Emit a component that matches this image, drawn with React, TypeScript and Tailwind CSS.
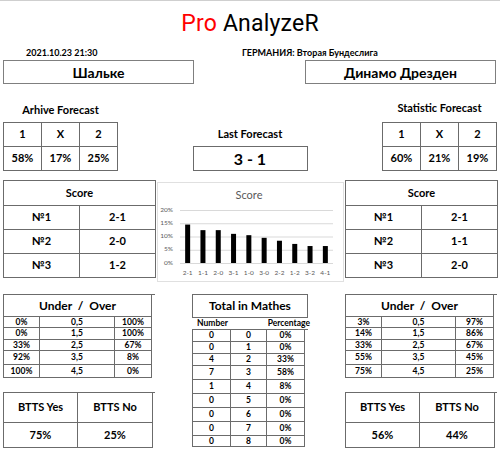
import React from "react";

const B = "border-[#6b6b6b]";

function Cell({ children, className = "" }: { children?: React.ReactNode; className?: string }) {
  return (
    <div className={`border-r border-b ${B} flex items-center justify-center ${className}`}>{children}</div>
  );
}

function OneXTwo({ vals }: { vals: string[] }) {
  return (
    <div className={`grid grid-cols-[38px_38px_38px] border-l border-t ${B} w-[115px] text-[11px] font-bold`}>
      {["1", "X", "2"].map((h) => (
        <Cell key={h} className="h-[24px]">{h}</Cell>
      ))}
      {vals.map((v, i) => (
        <Cell key={i} className="h-[24px]">{v}</Cell>
      ))}
    </div>
  );
}

function ScoreTable({ rows }: { rows: string[] }) {
  return (
    <div className={`w-[153px] border-l border-t ${B} text-[11px] font-bold grid grid-cols-[76px_76px]`}>
      <Cell className="col-span-2 h-[25px]">Score</Cell>
      {rows.map((r, i) => (
        <React.Fragment key={i}>
          <Cell className="h-[24px]">№{i + 1}</Cell>
          <Cell className="h-[24px]">{r}</Cell>
        </React.Fragment>
      ))}
    </div>
  );
}

const uoHeights = ["h-[11px]", "h-[12px]", "h-[11px]", "h-[14px]", "h-[13px]"];

function UnderOver({ rows, cols }: { rows: string[][]; cols: string }) {
  return (
    <div className={`w-[152px] border-l border-t ${B} grid ${cols} font-bold text-[8.5px]`}>
      <Cell className="col-span-3 h-[22px] text-[12px]">
        <span className="whitespace-pre">Under  /  Over</span>
      </Cell>
      {rows.map((r, i) => (
        <React.Fragment key={i}>
          <Cell className={uoHeights[i]}>{r[0]}</Cell>
          <Cell className={uoHeights[i]}>{r[1]}</Cell>
          <Cell className={uoHeights[i]}>{r[2]}</Cell>
        </React.Fragment>
      ))}
    </div>
  );
}

function Btts({ yes, no, cols }: { yes: string; no: string; cols: string }) {
  return (
    <div className={`w-[152px] border-l border-t ${B} grid ${cols} font-bold text-[11px]`}>
      <Cell className="h-[30px]">BTTS Yes</Cell>
      <Cell className="h-[30px]">BTTS No</Cell>
      <Cell className="h-[25px]">{yes}</Cell>
      <Cell className="h-[25px]">{no}</Cell>
    </div>
  );
}

function Chart() {
  const labels = ["2-1", "1-1", "2-0", "3-1", "1-0", "3-0", "2-2", "1-2", "3-2", "4-1"];
  const vals = [14.5, 12.4, 12.4, 11, 10.5, 9.5, 8.4, 7.2, 6.4, 6.4];
  const x0 = 22;
  const x1 = 175;
  const y0 = 80;
  const step = (x1 - x0) / 10;
  return (
    <div className="w-[187px] h-[100px] border border-[#e0e0e0] mt-[2px]">
      <svg width="185" height="98" className="block">
        <text x="91" y="13" textAnchor="middle" dominantBaseline="middle" fontSize="11" fill="#595959" fontFamily="Lato, sans-serif">
          Score
        </text>
        {[0, 5, 10, 15, 20].map((p) => {
          const y = y0 - p * 2.65;
          return (
            <g key={p}>
              <line x1={x0} x2={x1} y1={y + 0.5} y2={y + 0.5} stroke="#d9d9d9" strokeWidth="1" />
              <text x="15" y={y} textAnchor="end" dominantBaseline="middle" fontSize="6.5" fill="#595959" fontFamily="Lato, sans-serif">
                {p}%
              </text>
            </g>
          );
        })}
        {vals.map((v, i) => {
          const cx = x0 + step / 2 + i * step;
          const h = v * 2.65;
          return <rect key={i} x={cx - 2.5} y={y0 - h} width="5" height={h} fill="#000" />;
        })}
        {labels.map((l, i) => (
          <text key={l} x={x0 + step / 2 + i * step} y="90" textAnchor="middle" dominantBaseline="middle" fontSize="6.5" fill="#595959" fontFamily="Lato, sans-serif">
            {l}
          </text>
        ))}
      </svg>
    </div>
  );
}

const mathRows = [
  ["0", "0", "0%"],
  ["0", "1", "0%"],
  ["4", "2", "33%"],
  ["7", "3", "58%"],
  ["1", "4", "8%"],
  ["0", "5", "0%"],
  ["0", "6", "0%"],
  ["0", "7", "0%"],
  ["0", "8", "0%"],
];
const mathH = ["h-[12px]", "h-[12px]", "h-[12px]", "h-[14px]", "h-[14px]", "h-[14px]", "h-[14px]", "h-[14px]", "h-[11px]"];

export default function App() {
  return (
    <div className="w-[500px] h-[457px] overflow-hidden bg-white border-t border-[#cfcfcf] text-black font-['Lato',sans-serif]">
      {/* Title */}
      <div className="pt-[9px] h-[37px] flex justify-center">
        <div className="text-[23px] leading-[28px] font-['Roboto',sans-serif] tracking-[0.2px]">
          <span className="text-[#ff0000]">Pro</span> AnalyzeR
        </div>
      </div>
      {/* info row */}
      <div className="mt-[9px] h-[12px] flex items-center text-[9px] font-bold leading-[12px]">
        <div className="ml-[26px] w-[216px]">2021.10.23 21:30</div>
        <div>ГЕРМАНИЯ: Вторая Бундеслига</div>
      </div>
      {/* teams */}
      <div className="mt-[1px] flex justify-between pl-[3px] pr-[4px]">
        <div className="w-[191px] h-[24px] border border-[#7f7f7f] flex items-center justify-center text-[14px] font-bold">Шальке</div>
        <div className="w-[191px] h-[24px] border border-[#7f7f7f] flex items-center justify-center text-[14px] font-bold">Динамо Дрезден</div>
      </div>
      {/* forecasts */}
      <div className="mt-[16px] flex justify-between px-[3px]">
        <div className="w-[115px] pt-[3px]">
          <div className="h-[14px] leading-[14px] text-center text-[11px] font-bold">Arhive Forecast</div>
          <div className="mt-[5px]">
            <OneXTwo vals={["58%", "17%", "25%"]} />
          </div>
        </div>
        <div className="w-[115px] pt-[27px]">
          <div className="h-[14px] leading-[14px] text-center text-[11px] font-bold">Last Forecast</div>
          <div className={`mt-[5px] h-[25px] border ${B} flex items-center justify-center text-[16px] font-bold`}>3 - 1</div>
        </div>
        <div className="w-[115px] pt-[1px]">
          <div className="h-[14px] leading-[14px] text-center text-[11px] font-bold">Statistic Forecast</div>
          <div className="mt-[7px]">
            <OneXTwo vals={["60%", "21%", "19%"]} />
          </div>
        </div>
      </div>
      {/* score section */}
      <div className="mt-[9px] flex items-start pl-[3px]">
        <ScoreTable rows={["2-1", "2-0", "1-2"]} />
        <div className="ml-[1px]">
          <Chart />
        </div>
        <div className="ml-[1px]">
          <ScoreTable rows={["2-1", "1-1", "2-0"]} />
        </div>
      </div>
      {/* lower section */}
      <div className="mt-[12px] flex items-start pl-[3px]">
        <div className="w-[152px]">
          <UnderOver
            cols="grid-cols-[36px_75px_37px]"
            rows={[
              ["0%", "0,5", "100%"],
              ["0%", "1,5", "100%"],
              ["33%", "2,5", "67%"],
              ["92%", "3,5", "8%"],
              ["100%", "4,5", "0%"],
            ]}
          />
          <div className="mt-[14px]">
            <Btts yes="75%" no="25%" cols="grid-cols-[74px_75px]" />
          </div>
        </div>
        <div className="ml-[37px] w-[116px]">
          <div className={`h-[24px] border ${B} flex items-center justify-center text-[12px] font-bold`}>Total in Mathes</div>
          <div className="h-[11px] flex items-center justify-between text-[8.5px] font-bold leading-[11px] pl-[5px] -mr-[2px]">
            <span>Number</span>
            <span>Percentage</span>
          </div>
          <div className={`border-l border-t ${B} grid grid-cols-[38px_36px_38px] text-[8.5px] font-bold`}>
            {mathRows.map((r, i) => (
              <React.Fragment key={i}>
                <Cell className={mathH[i]}>{r[0]}</Cell>
                <Cell className={mathH[i]}>{r[1]}</Cell>
                <Cell className={mathH[i]}>{r[2]}</Cell>
              </React.Fragment>
            ))}
          </div>
        </div>
        <div className="ml-[37px] w-[152px]">
          <UnderOver
            cols="grid-cols-[36px_74px_38px]"
            rows={[
              ["3%", "0,5", "97%"],
              ["14%", "1,5", "86%"],
              ["33%", "2,5", "67%"],
              ["55%", "3,5", "45%"],
              ["75%", "4,5", "25%"],
            ]}
          />
          <div className="mt-[14px]">
            <Btts yes="56%" no="44%" cols="grid-cols-[74px_75px]" />
          </div>
        </div>
      </div>
    </div>
  );
}
